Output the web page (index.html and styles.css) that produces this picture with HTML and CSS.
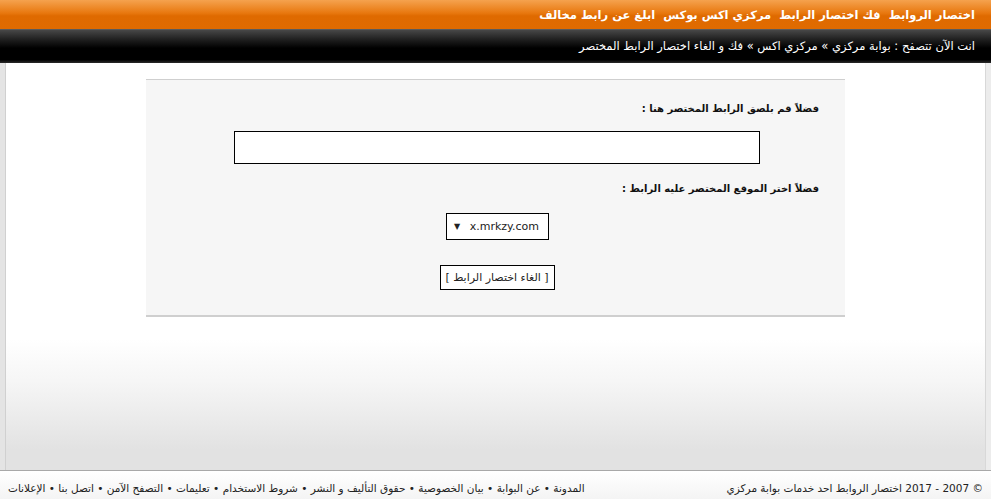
FILE: index.html
```html
<!DOCTYPE html>
<html lang="ar" dir="rtl">
<head>
  <meta charset="UTF-8">
  <title>فك و الغاء اختصار الرابط المختصر</title>
  <link rel="stylesheet" href="styles.css">
</head>
<body>
  <div class="top-nav">
    <a href="#">اختصار الروابط</a>
    <a href="#">فك اختصار الرابط</a>
    <a href="#">مركزي اكس بوكس</a>
    <a href="#">ابلغ عن رابط مخالف</a>
  </div>

  <div class="breadcrumb">انت الآن تتصفح : <a href="#">بوابة مركزي</a> » <a href="#">مركزي اكس</a> » فك و الغاء اختصار الرابط المختصر</div>

  <div class="page">
    <form class="panel">
      <label class="field-label" for="short-url">فضلاً قم بلصق الرابط المختصر هنا :</label>
      <div class="row row-input">
        <input type="text" id="short-url" class="url-input">
      </div>

      <label class="field-label label-site" for="site">فضلاً اختر الموقع المختصر عليه الرابط :</label>
      <div class="row row-select">
        <div class="select-box" id="site">
          <span>x.mrkzy.com</span>
          <span class="arrow">▼</span>
        </div>
      </div>

      <div class="row">
        <button type="button" class="submit-btn">[ الغاء اختصار الرابط ]</button>
      </div>
    </form>
  </div>

  <div class="footer">
    <span>© 2007 - 2017 اختصار الروابط احد خدمات بوابة مركزي</span>
    <span class="footer-links">
      <a href="#">المدونة</a> • <a href="#">عن البوابة</a> • <a href="#">بيان الخصوصية</a> • <a href="#">حقوق التأليف و النشر</a> • <a href="#">شروط الاستخدام</a> • <a href="#">تعليمات</a> • <a href="#">التصفح الآمن</a> • <a href="#">اتصل بنا</a> • <a href="#">الإعلانات</a>
    </span>
  </div>
</body>
</html>
```

FILE: styles.css
```css
body {
  margin: 0;
  font-family: "DejaVu Sans", Tahoma, sans-serif;
  background-color: #fff;
  height: 499px;
  display: flex;
  flex-direction: column;
}
a {
  color: inherit;
  text-decoration: none;
}
.top-nav {
  height: 30px;
  box-sizing: border-box;
  padding: 0 16px 0 0;
  display: flex;
  align-items: center;
  gap: 8px;
  background: linear-gradient(#f5a24e, #e8780f 45%, #df6a00 55%, #e06b00);
  border-bottom: 1px solid #5a5a5a;
  color: #fff;
  font-size: 11.5px;
  font-weight: bold;
}
.breadcrumb {
  height: 33px;
  line-height: 33px;
  box-sizing: border-box;
  padding: 0 16px 0 0;
  background: linear-gradient(#474747, #1e1e1e 30%, #000 55%, #000 90%, #2a2a2a);
  color: #fff;
  font-size: 11.5px;
}
.page {
  flex: 1;
  padding: 16px 141px 0;
  background: linear-gradient(#fff 68%, #f6f6f6 78%, #e2e2e2 95%);
  border-left: 5px solid #e4e4e4;
  border-right: 5px solid #ececec;
  box-shadow: inset 1px 0 0 #d0d0d0, inset -1px 0 0 #d8d8d8;
}
.panel {
  background-color: #f6f6f6;
  border-top: 1px solid #cfcfcf;
  border-bottom: 2px solid #cfcfcf;
  padding: 23px 26px 25px;
  display: flex;
  flex-direction: column;
}
.field-label {
  font-size: 10px;
  font-weight: bold;
  color: #111;
  margin-bottom: 17px;
}
.label-site {
  margin-bottom: 19px;
}
.row {
  display: flex;
  justify-content: center;
}
.row-input {
  margin-bottom: 19px;
}
.row-select {
  margin-bottom: 25px;
}
.url-input {
  width: 526px;
  height: 33px;
  box-sizing: border-box;
  border: 1px solid #000;
  background: #fff;
  margin-left: 3px;
}
.select-box {
  width: 103px;
  height: 27px;
  box-sizing: border-box;
  border: 1px solid #000;
  background: #fff;
  display: flex;
  align-items: center;
  justify-content: space-between;
  padding: 0 9px 0 7px;
  margin-left: 4px;
  font-size: 11px;
  color: #222;
}
.arrow {
  font-size: 8px;
}
.submit-btn {
  width: 115px;
  height: 25px;
  border: 1px solid #000;
  background: #fff;
  font-family: "DejaVu Sans", Tahoma, sans-serif;
  font-size: 11px;
  color: #222;
  padding: 0;
  margin-left: 3px;
}
.footer {
  height: 29px;
  box-sizing: border-box;
  border-top: 1px solid #a8a8a8;
  background: linear-gradient(#fff, #f4f4f4);
  display: flex;
  align-items: center;
  justify-content: space-between;
  padding: 6px 8px 0;
  font-size: 10.5px;
  color: #222;
}
```
